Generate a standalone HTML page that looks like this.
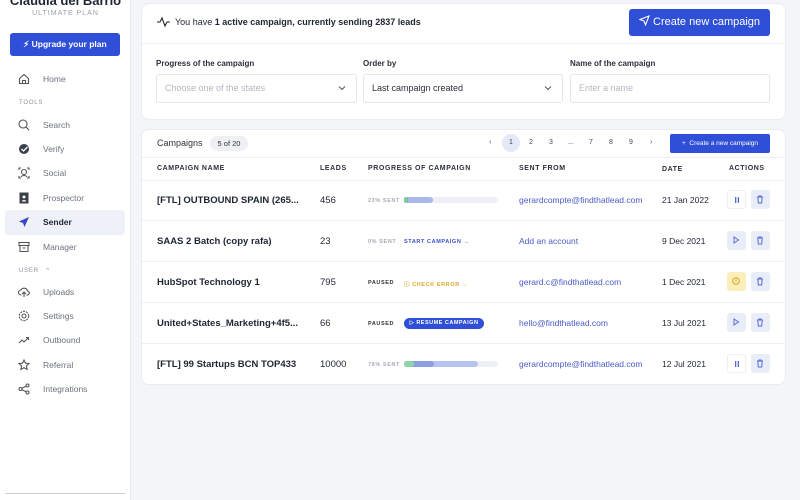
<!DOCTYPE html>
<html><head><meta charset="utf-8"><style>
*{box-sizing:border-box;margin:0;padding:0}
body{width:800px;height:500px;overflow:hidden;background:#f3f5f9;font-family:"Liberation Sans",sans-serif;color:#1f2533;position:relative}
.sb{position:absolute;left:0;top:0;width:131px;height:500px;background:#fff;border-right:1px solid #e6e9ef}
.name{position:absolute;top:-7px;left:0;width:131px;text-align:center;font-size:13px;font-weight:bold;color:#1f2533}
.plan{position:absolute;top:10px;width:131px;text-align:center;font-size:7px;letter-spacing:1px;color:#9aa1ad}
.up{position:absolute;left:10px;top:33px;width:110px;height:23px;background:#2f4fd6;border-radius:3px;color:#fff;font-size:8.5px;font-weight:bold;text-align:center;line-height:23px}
.it{position:absolute;left:5px;width:120px;height:25px;font-size:8.5px;color:#6b7280;line-height:25px;padding-left:38px}
.it svg{position:absolute;left:13px;top:6px}
.it.act{background:#eef1f8;border-radius:4px;color:#1f2533;font-weight:bold}
.sec{position:absolute;left:19px;font-size:6px;letter-spacing:.8px;color:#8b919c}
.card{position:absolute;left:141px;width:645px;background:#fff;border-radius:8px;border:1px solid #e9ecf1}
.lbl{position:absolute;top:59px;font-size:8px;font-weight:bold;color:#2b303a}
.inp{position:absolute;top:74px;height:29px;border:1px solid #e3e6eb;border-radius:3px;font-size:9px;line-height:27px;padding-left:8px;color:#b2b7c0}
.chev{position:absolute;right:10px;top:10px}
.th{position:absolute;top:165px;font-size:7px;font-weight:bold;letter-spacing:.6px;color:#2b303a}
.row{position:absolute;left:141px;width:645px;height:1px;background:#eceef2}
.c{position:absolute;font-size:9.5px}
.nm{font-weight:bold;font-size:9.5px}
.mail{color:#4a5bc8;font-size:8.5px}
.small{font-size:5.5px;letter-spacing:.6px;color:#a5abb5;font-weight:bold}
.btn{position:absolute;width:19px;height:19px;border-radius:3px;background:#e9edf8}
.btn svg{position:absolute;left:5px;top:5px}
.pg{position:absolute;top:139px;font-size:7px;color:#444}
</style></head><body>
<div class="sb">
<div class="name">Claudia del Barrio</div>
<div class="plan">ULTIMATE PLAN</div>
<div class="up">&#x26A1;&#xFE0E; Upgrade your plan</div>
<div class="it" style="top:67px"><svg width="12" height="12" viewBox="0 0 12 12" fill="none" stroke="#555" stroke-width="1.1"><path d="M1.5 5.5L6 1.5l4.5 4v5h-9z"/><path d="M4.5 10.5V7.5h3v3"/></svg>Home</div>
<div class="sec" style="top:100px">TOOLS</div>
<div class="it" style="top:113px"><svg width="12" height="12" viewBox="0 0 12 12" fill="none" stroke="#555" stroke-width="1.1"><circle cx="5" cy="5" r="4"/><path d="M8 8l3 3"/></svg>Search</div>
<div class="it" style="top:137px"><svg width="12" height="12" viewBox="0 0 12 12"><circle cx="6" cy="6" r="5" fill="#3a3f4a"/><path d="M3.5 6l2 2 4-4" stroke="#fff" fill="none" stroke-width="1.3"/></svg>Verify</div>
<div class="it" style="top:161px"><svg width="12" height="12" viewBox="0 0 12 12" fill="none" stroke="#555" stroke-width="1.1"><circle cx="6" cy="5" r="2.5"/><path d="M1 3V1h2M9 1h2v2M1 9v2h2M11 9v2H9M3 10c1-2 5-2 6 0"/></svg>Social</div>
<div class="it" style="top:186px"><svg width="12" height="12" viewBox="0 0 12 12"><rect x="1.5" y="0.5" width="9" height="11" fill="#3a3f4a"/><circle cx="6" cy="5" r="1.5" fill="#fff"/><path d="M3.5 9.5c1-2 4-2 5 0" fill="#fff"/></svg>Prospector</div>
<div class="it act" style="top:210px"><svg width="12" height="12" viewBox="0 0 12 12"><path d="M11 1L1 5.5l4 1.5 1.5 4z" fill="#3347c9"/></svg>Sender</div>
<div class="it" style="top:235px"><svg width="12" height="12" viewBox="0 0 12 12" fill="none" stroke="#555" stroke-width="1.1"><rect x="1" y="1.5" width="10" height="3"/><path d="M2 4.5v6h8v-6M4.5 7h3"/></svg>Manager</div>
<div class="sec" style="top:268px">USER &nbsp;&nbsp;^</div>
<div class="it" style="top:280px"><svg width="12" height="12" viewBox="0 0 12 12" fill="none" stroke="#555" stroke-width="1.1"><path d="M3.5 9H3a2.5 2.5 0 010-5 3.5 3.5 0 016.5 1A2 2 0 019 9h-.5M6 11V6M4 8l2-2 2 2"/></svg>Uploads</div>
<div class="it" style="top:304px"><svg width="12" height="12" viewBox="0 0 12 12" fill="none" stroke="#555" stroke-width="1.1"><circle cx="6" cy="6" r="2"/><circle cx="6" cy="6" r="4.7" stroke-dasharray="2 1"/></svg>Settings</div>
<div class="it" style="top:328px"><svg width="12" height="12" viewBox="0 0 12 12" fill="none" stroke="#555" stroke-width="1.1"><path d="M1 9l3-3 2 2 4.5-4.5M8 3.5h2.5V6"/></svg>Outbound</div>
<div class="it" style="top:353px"><svg width="12" height="12" viewBox="0 0 12 12" fill="none" stroke="#555" stroke-width="1.1"><path d="M6 1l1.5 3.2 3.5.4-2.6 2.4.7 3.5L6 8.8 2.9 10.5l.7-3.5L1 4.6l3.5-.4z"/></svg>Referral</div>
<div class="it" style="top:377px"><svg width="12" height="12" viewBox="0 0 12 12" fill="none" stroke="#555" stroke-width="1.1"><circle cx="2.5" cy="6" r="1.5"/><circle cx="9.5" cy="2.5" r="1.5"/><circle cx="9.5" cy="9.5" r="1.5"/><path d="M4 5.3l4-2M4 6.7l4 2"/></svg>Integrations</div>
<div style="position:absolute;left:5px;top:493px;width:120px;height:1px;background:#ccc"></div>
</div>

<div class="card" style="top:3px;height:117px">
<div style="position:absolute;left:0;top:39px;width:100%;height:1px;background:#eceef2"></div>
</div>
<svg style="position:absolute;left:157px;top:16px" width="13" height="12" viewBox="0 0 13 12" fill="none" stroke="#222" stroke-width="1.1"><path d="M0 6h3l2-4 3 8 2-4h3"/></svg>
<div class="c" style="left:175px;top:17px;font-size:9px">You have <b>1 active campaign, currently sending 2837 leads</b></div>
<div style="position:absolute;left:629px;top:9px;width:141px;height:27px;background:#2f4fd6;border-radius:3px;color:#fff;font-size:11px;line-height:27px;text-align:center"><svg width="11" height="11" viewBox="0 0 11 11" fill="none" stroke="#fff" stroke-width="1.1" style="vertical-align:-1px"><path d="M10 1L1 4.5l4 1.5 1.5 4z"/></svg> Create new campaign</div>
<div class="lbl" style="left:156px">Progress of the campaign</div>
<div class="lbl" style="left:363px">Order by</div>
<div class="lbl" style="left:570px">Name of the campaign</div>
<div class="inp" style="left:156px;width:201px">Choose one of the states<svg class="chev" width="8" height="6" viewBox="0 0 8 6" fill="none" stroke="#555"><path d="M1 1.5l3 3 3-3"/></svg></div>
<div class="inp" style="left:363px;width:200px;color:#2b303a">Last campaign created<svg class="chev" width="8" height="6" viewBox="0 0 8 6" fill="none" stroke="#555"><path d="M1 1.5l3 3 3-3"/></svg></div>
<div class="inp" style="left:570px;width:200px">Enter a name</div>

<div class="card" style="top:129px;height:256px"></div>
<div class="c" style="left:157px;top:138px;font-size:9px;color:#333">Campaigns</div>
<div style="position:absolute;left:210px;top:136px;width:38px;height:15px;background:#eef0f4;border-radius:8px;font-size:7.5px;line-height:15px;text-align:center;color:#333">5 of 20</div>
<div class="pg" style="left:489px">&#8249;</div>
<div style="position:absolute;left:502px;top:134px;width:18px;height:18px;border-radius:9px;background:#e4e9f8"></div>
<div class="pg" style="left:509px">1</div><div class="pg" style="left:529px">2</div><div class="pg" style="left:549px">3</div><div class="pg" style="left:568px">...</div><div class="pg" style="left:589px">7</div><div class="pg" style="left:609px">8</div><div class="pg" style="left:629px">9</div><div class="pg" style="left:650px">&#8250;</div>
<div style="position:absolute;left:670px;top:134px;width:100px;height:19px;background:#2f4fd6;border-radius:2px;color:#fff;font-size:6.5px;line-height:19px;text-align:center">+ &nbsp;Create a new campaign</div>
<div class="row" style="top:157px"></div>
<div class="th" style="left:157px">CAMPAIGN NAME</div>
<div class="th" style="left:320px">LEADS</div>
<div class="th" style="left:368px">PROGRESS OF CAMPAIGN</div>
<div class="th" style="left:519px">SENT FROM</div>
<div class="th" style="left:662px;top:166px">DATE</div>
<div class="th" style="left:729px">ACTIONS</div>
<div class="row" style="top:180px"></div>
<div class="row" style="top:220px"></div>
<div class="row" style="top:261px"></div>
<div class="row" style="top:302px"></div>
<div class="row" style="top:343px"></div>

<div class="c nm" style="left:157px;top:195px">[FTL] OUTBOUND SPAIN (265...</div>
<div class="c" style="left:320px;top:195px">456</div>
<div class="c small" style="left:368px;top:198px">23% SENT</div>
<div style="position:absolute;left:404px;top:197px;width:94px;height:6px;border-radius:3px;background:#eef0f6"></div>
<div style="position:absolute;left:404px;top:197px;width:29px;height:6px;border-radius:3px;background:#aab8ea"></div>
<div style="position:absolute;left:404px;top:197px;width:4px;height:6px;border-radius:3px;background:#7cc89a"></div>
<div class="c mail" style="left:519px;top:195px">gerardcompte@findthatlead.com</div>
<div class="c" style="left:662px;top:195px;font-size:8.5px">21 Jan 2022</div>
<div class="btn" style="left:727px;top:190px;background:#fff;border:1px solid #eee"><svg width="8" height="8" viewBox="0 0 8 8" fill="#5a6bd6"><rect x="2" y="1" width="1.3" height="6"/><rect x="4.7" y="1" width="1.3" height="6"/></svg></div>
<div class="btn" style="left:751px;top:190px"><svg width="8" height="9" viewBox="0 0 8 9" fill="none" stroke="#5a6bd6"><path d="M1 2h6M3 2V1h2v1M1.8 2l.5 6h3.4l.5-6"/></svg></div>

<div class="c nm" style="left:157px;top:236px">SAAS 2 Batch (copy rafa)</div>
<div class="c" style="left:320px;top:236px">23</div>
<div class="c small" style="left:368px;top:239px">0% SENT</div>
<div class="c small" style="left:404px;top:239px;color:#3b50c9">START CAMPAIGN &#8594;</div>
<div class="c mail" style="left:519px;top:236px">Add an account</div>
<div class="c" style="left:662px;top:236px;font-size:8.5px">9 Dec 2021</div>
<div class="btn" style="left:727px;top:231px"><svg width="8" height="8" viewBox="0 0 8 8" fill="none" stroke="#5a6bd6"><path d="M2 1l4.5 3L2 7z"/></svg></div>
<div class="btn" style="left:751px;top:231px"><svg width="8" height="9" viewBox="0 0 8 9" fill="none" stroke="#5a6bd6"><path d="M1 2h6M3 2V1h2v1M1.8 2l.5 6h3.4l.5-6"/></svg></div>

<div class="c nm" style="left:157px;top:277px">HubSpot Technology 1</div>
<div class="c" style="left:320px;top:277px">795</div>
<div class="c small" style="left:368px;top:280px;color:#333">PAUSED</div>
<div class="c small" style="left:404px;top:280px;color:#e0a830">&#9432; CHECK ERROR &#8594;</div>
<div class="c mail" style="left:519px;top:277px">gerard.c@findthatlead.com</div>
<div class="c" style="left:662px;top:277px;font-size:8.5px">1 Dec 2021</div>
<div class="btn" style="left:727px;top:272px;background:#fbeebb"><svg width="8" height="8" viewBox="0 0 8 8" fill="none" stroke="#d6a21f"><circle cx="4" cy="4" r="3.3"/><path d="M4 2.3v2.2"/></svg></div>
<div class="btn" style="left:751px;top:272px"><svg width="8" height="9" viewBox="0 0 8 9" fill="none" stroke="#5a6bd6"><path d="M1 2h6M3 2V1h2v1M1.8 2l.5 6h3.4l.5-6"/></svg></div>

<div class="c nm" style="left:157px;top:318px">United+States_Marketing+4f5...</div>
<div class="c" style="left:320px;top:318px">66</div>
<div class="c small" style="left:368px;top:321px;color:#333">PAUSED</div>
<div style="position:absolute;left:404px;top:318px;width:80px;height:11px;border-radius:6px;background:#2f4fd6;color:#fff;font-size:5.5px;font-weight:bold;letter-spacing:.5px;line-height:11px;text-align:center">&#9655; RESUME CAMPAIGN</div>
<div class="c mail" style="left:519px;top:318px">hello@findthatlead.com</div>
<div class="c" style="left:662px;top:318px;font-size:8.5px">13 Jul 2021</div>
<div class="btn" style="left:727px;top:313px"><svg width="8" height="8" viewBox="0 0 8 8" fill="none" stroke="#5a6bd6"><path d="M2 1l4.5 3L2 7z"/></svg></div>
<div class="btn" style="left:751px;top:313px"><svg width="8" height="9" viewBox="0 0 8 9" fill="none" stroke="#5a6bd6"><path d="M1 2h6M3 2V1h2v1M1.8 2l.5 6h3.4l.5-6"/></svg></div>

<div class="c nm" style="left:157px;top:359px">[FTL] 99 Startups BCN TOP433</div>
<div class="c" style="left:320px;top:359px">10000</div>
<div class="c small" style="left:368px;top:362px">78% SENT</div>
<div style="position:absolute;left:404px;top:361px;width:94px;height:6px;border-radius:3px;background:#eef0f6"></div>
<div style="position:absolute;left:404px;top:361px;width:74px;height:6px;border-radius:3px;background:#b7c3ef"></div>
<div style="position:absolute;left:404px;top:361px;width:30px;height:6px;border-radius:3px;background:#8d9fe3"></div>
<div style="position:absolute;left:404px;top:361px;width:10px;height:6px;border-radius:3px;background:#8fd3a8"></div>
<div class="c mail" style="left:519px;top:359px">gerardcompte@findthatlead.com</div>
<div class="c" style="left:662px;top:359px;font-size:8.5px">12 Jul 2021</div>
<div class="btn" style="left:727px;top:354px;background:#fff;border:1px solid #eee"><svg width="8" height="8" viewBox="0 0 8 8" fill="#5a6bd6"><rect x="2" y="1" width="1.3" height="6"/><rect x="4.7" y="1" width="1.3" height="6"/></svg></div>
<div class="btn" style="left:751px;top:354px"><svg width="8" height="9" viewBox="0 0 8 9" fill="none" stroke="#5a6bd6"><path d="M1 2h6M3 2V1h2v1M1.8 2l.5 6h3.4l.5-6"/></svg></div>
</body></html>
